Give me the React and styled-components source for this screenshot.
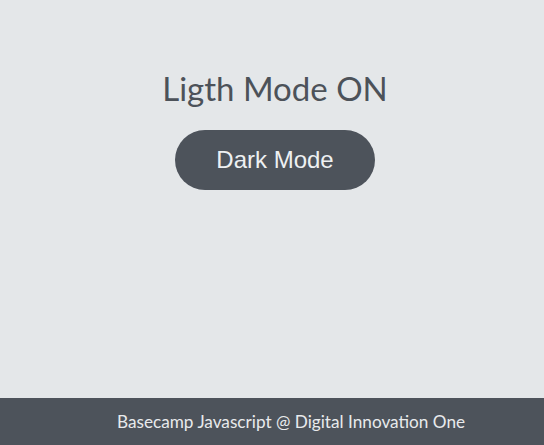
import React from "react";
import styled, { createGlobalStyle } from "styled-components";

const Global = createGlobalStyle`
  html, body { margin: 0; padding: 0; height: 100%; }
  body { background: #e4e7e9; font-family: "Lato", "Open Sans", sans-serif; }
  #root { height: 100%; }
`;

const Page = styled.div`
  display: flex;
  flex-direction: column;
  height: 100vh;
`;

const Main = styled.main`
  flex: 1;
  display: flex;
  flex-direction: column;
  align-items: center;
  padding-top: 69px;
  padding-left: 6px;
`;

const Title = styled.h1`
  margin: 0 0 22px;
  font-family: "Lato", sans-serif;
  font-weight: 400;
  font-size: 33px;
  line-height: 39px;
  color: #4c5259;
`;

const ModeButton = styled.button`
  width: 200px;
  height: 60px;
  border: none;
  border-radius: 30px;
  background: #4d535b;
  color: #eef0f2;
  font-family: "Liberation Sans", Arial, sans-serif;
  font-size: 24px;
  cursor: pointer;
`;

const Footer = styled.footer`
  height: 47px;
  background: #4d535b;
  color: #e8eaec;
  display: flex;
  align-items: center;
  justify-content: center;
  padding-left: 38px;
  font-family: "Lato", sans-serif;
  font-size: 17.2px;
`;

export default function App() {
  return (
    <Page>
      <Global />
      <Main>
        <Title>Ligth Mode ON</Title>
        <ModeButton>Dark Mode</ModeButton>
      </Main>
      <Footer>Basecamp Javascript @ Digital Innovation One</Footer>
    </Page>
  );
}
